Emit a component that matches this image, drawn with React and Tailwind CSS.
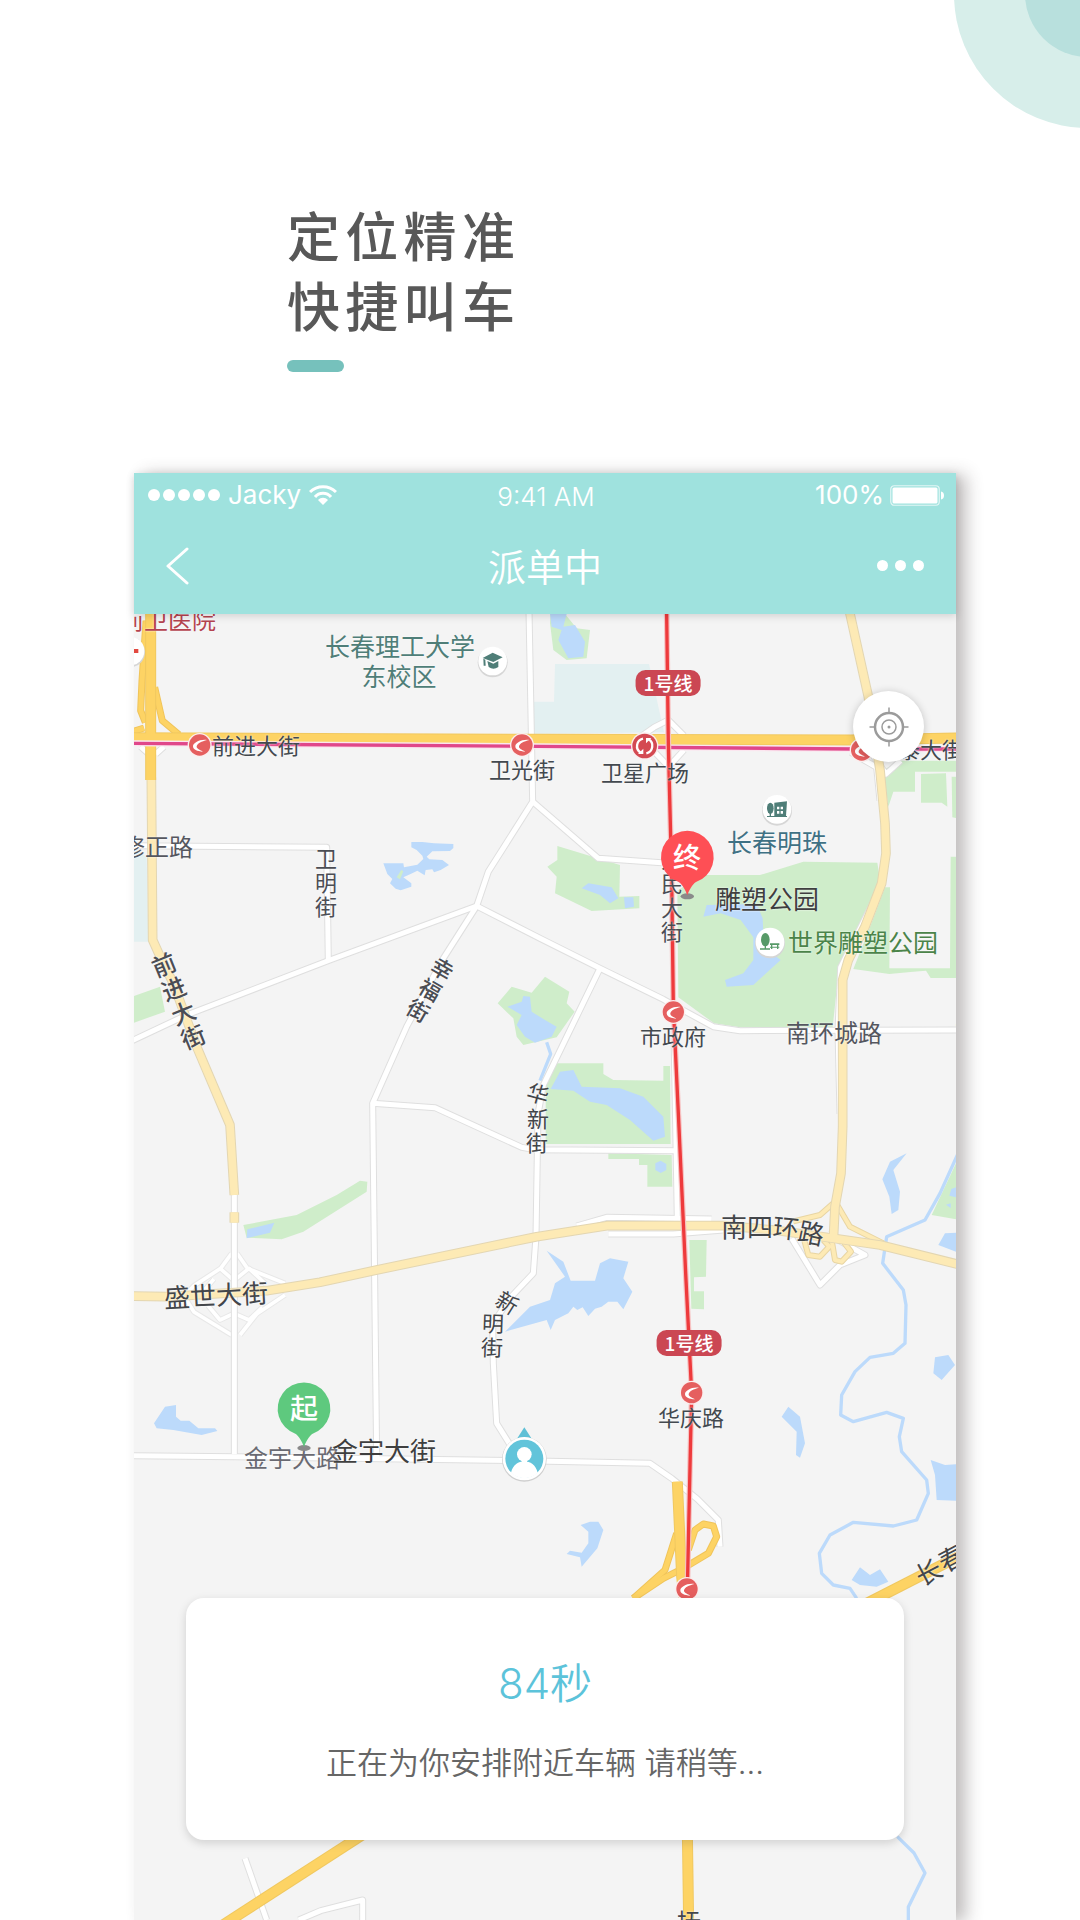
const WATER = '#bcdafb'
const GREEN = '#cfedca'

const campuses = [
  '1263,150 1545,150 1590,355 1200,360 1200,263 1260,263',
  '0,700 38,730 43,983 0,983',
]

const parks = [
  '1250,0 1293,0 1328,43 1368,48 1358,133 1298,138 1258,108 1248,28',
  '1270,696 1458,753 1456,848 1516,846 1516,883 1373,891 1263,838 1268,788 1240,758 1270,738',
  '1630,830 1700,783 1878,783 2008,743 2230,746 2240,808 2193,938 2113,1078 2096,1240 1818,1240 1740,1228 1633,1150',
  '2248,468 2300,440 2466,440 2466,473 2343,473 2343,533 2278,533 2263,578',
  '2361,480 2436,478 2440,578 2423,566 2361,566',
  '2453,488 2466,488 2466,612 2455,610',
  '2253,820 2268,820 2266,1063 2448,1063 2450,728 2466,728 2466,1092 2390,1092 2376,1070 2338,1073 2266,1080 2158,1065 2200,960',
  '0,1146 78,1118 93,1193 0,1226',
  '328,1833 488,1803 608,1743 678,1700 700,1703 698,1733 508,1853 443,1876 338,1871',
  '1091,1168 1133,1118 1193,1136 1233,1088 1306,1133 1298,1168 1322,1193 1268,1270 1168,1293 1148,1268 1138,1213',
  '1265,1348 1408,1348 1408,1380 1438,1398 1588,1400 1588,1356 1608,1356 1610,1590 1235,1590 1235,1410',
  '1423,1618 1613,1623 1615,1718 1540,1718 1540,1653 1515,1653 1515,1635 1423,1635',
  '1666,1878 1718,1878 1716,1988 1680,1990 1680,2032 1710,2032 1710,2086 1672,2084',
  '2466,1648 2393,1803 2466,1816',
]

const lakes = [
  '1248,0 1298,0 1288,38 1323,33 1353,83 1348,128 1303,133 1273,78 1283,48 1253,38',
  '832,684 865,684 900,688 958,690 958,702 948,711 895,712 878,728 886,736 925,738 945,753 920,768 900,775 895,766 875,768 872,784 850,770 830,780 808,790 832,808 832,818 800,829 785,824 768,808 775,795 760,780 748,748 808,748 810,760 850,752 868,735 865,725 848,708 832,700',
  '1343,823 1363,808 1433,820 1453,853 1428,868 1398,843',
  '1470,850 1498,850 1500,878 1473,883',
  '1708,908 1718,873 1868,870 1886,913 1890,1000 1940,1038 1858,1113 1778,1118 1773,1098 1828,1078 1858,1038 1858,970 1820,918 1760,898',
  '340,1846 421,1826 408,1856 338,1873',
  '1120,1178 1163,1163 1168,1146 1188,1148 1193,1193 1233,1218 1268,1238 1253,1268 1203,1286 1173,1268 1148,1233 1163,1203',
  '1250,1425 1278,1373 1318,1368 1343,1418 1458,1423 1528,1448 1588,1508 1593,1568 1558,1580 1488,1518 1418,1473 1368,1463 1318,1430',
  '1564,1648 1580,1640 1597,1650 1597,1668 1580,1677 1564,1668',
  '1238,1910 1288,1943 1310,2000 1383,2000 1398,1948 1428,1933 1483,1943 1468,1993 1495,2033 1468,2086 1450,2063 1423,2063 1403,2078 1383,2084 1363,2106 1346,2080 1330,2088 1318,2078 1303,2098 1263,2118 1250,2148 1238,2118 1113,2153 1188,2078 1248,2058 1263,2008 1293,1988',
  '60,2428 93,2378 126,2373 126,2408 140,2420 166,2420 193,2443 243,2443 250,2451 203,2463 118,2448 68,2443',
  '1340,2733 1368,2723 1393,2723 1408,2748 1390,2803 1343,2858 1338,2830 1298,2820 1308,2810 1343,2816 1363,2788 1363,2753',
  '1963,2378 1998,2408 2013,2488 1998,2531 1986,2523 1988,2453 1943,2408',
  '2403,2230 2443,2223 2463,2253 2423,2298 2398,2278',
  '2390,2538 2433,2553 2466,2551 2466,2660 2408,2658 2403,2583',
  '2153,2898 2178,2860 2208,2883 2238,2866 2263,2903 2228,2918 2178,2913',
  '2318,1618 2278,1668 2298,1733 2293,1788 2273,1800 2266,1748 2245,1696 2268,1643',
  '2413,1893 2433,1858 2466,1856 2466,1913',
  '2452,1725 2466,1720 2466,1750 2446,1745',
  '2436,1772 2450,1768 2450,1782',
]

const rivers = [
  'M2476 1610 L2418 1738 L2373 1818 L2258 1868 L2246 1948 L2308 2028 L2316 2073 L2313 2188 L2278 2218 L2208 2230 L2163 2273 L2123 2343 L2120 2403 L2158 2423 L2258 2395 L2308 2413 L2296 2468 L2303 2513 L2378 2598 L2383 2638 L2348 2718 L2278 2736 L2158 2725 L2088 2763 L2056 2818 L2063 2878 L2098 2913 L2148 2923 L2168 2953',
  'M2290 3668 L2340 3717 L2373 3777 L2323 3879 L2323 3918',
  'M1238 1285 L1250 1320 L1218 1400',
]

const streets = [
  'M0 695 L578 700 L583 1043',
  'M-10 1282 L158 1203 L588 1038 L1028 876 L1218 973 L1398 1063 L1588 1156 L1738 1238 L1818 1250 L2476 1248',
  'M1185 -10 L1196 563 L1063 773 L1028 876 L925 1038 L818 1238 L716 1468 L723 2088 L728 2530',
  'M1196 563 L1393 733 L1583 746',
  'M716 1468 L903 1481 L1163 1600 L1203 1607 L1628 1610',
  'M1398 1063 L1228 1413 L1212 1500 L1210 1618 L1206 1868 L1198 1978 L1130 2050 L1076 2130 L1078 2248 L1088 2428 L1138 2508',
  'M301 1743 L301 2520',
  'M-10 2525 L301 2528 L1168 2540 L1548 2548 L1613 2593 L1690 2655 L1753 2718 L1758 2798',
  'M1620 1250 L1630 1818',
  'M1328 1836 L1418 1810 L1733 1815',
  'M1423 1860 L1618 1860 L1768 1848',
  'M1973 1873 L2058 2013 L2118 1953 L2193 1923 L2080 1860',
  'M1510 375 L1560 340 L1603 318 L1650 365',
  'M1558 410 L1604 458 L1650 408',
  'M2150 415 L2228 460 L2238 560',
  'M2200 400 L2256 480 L2300 440',
  'M20 398 L45 420 M90 398 L65 420',
  'M2225 850 L2120 1060 L2112 1250 L2118 1500',
  'M333 3733 L398 3918',
  'M494 3918 L560 3890 L686 3858 L686 3930',
]

const ramps = [
  'M293 1918 L260 1963 L180 2015 L150 2046 L180 2094 L293 2163',
  'M309 1918 L340 1963 L453 2008',
  'M453 2043 L368 2100 L318 2163',
  'M258 1963 L300 2000 L345 1963 L395 2010',
  'M210 2030 L240 1995 M222 2075 L258 2118 L300 2098 L345 2118 L385 2080',
]

const avenues = [
  'M52 490 L56 978 L84 1040 L118 1108 L188 1298 L288 1533 L301 1743',
  'M301 1795 L301 1826',
  'M-10 2046 L98 2048 L398 2030 L558 2005 L728 1968 L1208 1868 L1418 1835 L1768 1835 L1918 1848 L2098 1873 L2238 1893 L2476 1952',
  'M2146 -10 L2203 248 L2238 468 L2253 628 L2256 718 L2243 808 L2193 938 L2143 1038 L2126 1098 L2126 1538 L2121 1678 L2103 1778 L2098 1878',
]

const avenueRamps = [
  'M2108 1770 L2148 1838 L2248 1888',
  'M2098 1768 L2058 1803 L1978 1822',
  'M2068 1878 L2086 1898 L2058 1928 L2023 1923 L2011 1880',
  'M2093 1878 L2103 1938 L2123 1943 L2151 1913 L2128 1883',
]

const highways = [
  'M50 -10 L50 498',
  'M-10 371 L1218 376 L2150 378 L2476 372',
  'M1630 2603 L1643 2888 L1650 2952 L1664 3930',
  'M2183 2976 L2486 2821',
  'M762 3613 L259 3938',
]

const highwayRamps = [
  'M36 20 L24 200 L20 290 L34 325',
  'M62 220 L85 320 L135 362',
  'M-10 355 L30 342',
  'M1628 2758 L1593 2868 L1498 2953',
  'M1658 2858 L1588 2893 L1498 2953',
  'M1663 2808 L1683 2748 L1708 2730 L1738 2736 L1748 2768 L1723 2818 L1648 2863',
]

const stations = [[197, 393], [1164, 393], [2183, 408], [1618, 1194], [1673, 2336], [1659, 2925]]

const labels = [
  { text: '前卫医院', x: 34, y: 7, className: 'text-[24px] text-[#b5434f]' },
  { text: '长春理工大学', x: 266, y: 33, className: 'text-[25px] text-[#4f7e78]' },
  { text: '东校区', x: 265, y: 63, className: 'text-[25px] text-[#4f7e78]' },
  { text: '前进大街', x: 122, y: 132, className: 'text-[22px] text-[#43494f]' },
  { text: '卫光街', x: 388, y: 156, className: 'text-[22px] text-[#43494f]' },
  { text: '卫星广场', x: 511, y: 159, className: 'text-[22px] text-[#43494f]' },
  { text: '亚泰大街', x: 786, y: 136, className: 'text-[22px] text-[#43494f]' },
  { text: '修正路', x: 23, y: 234, className: 'text-[24px] text-[#55575f]' },
  { text: '长春明珠', x: 643, y: 229, className: 'text-[25px] text-[#3f7184]' },
  { text: '雕塑公园', x: 633, y: 286, className: 'text-[26px] text-[#3f3f3f]' },
  { text: '世界雕塑公园', x: 729, y: 329, className: 'text-[25px] text-[#4b8449]' },
  { text: '市政府', x: 539, y: 423, className: 'text-[22px] text-[#43494f]' },
  { text: '南环城路', x: 700, y: 420, className: 'text-[24px] text-[#55575f]' },
  { text: '南', x: 833, y: 420, className: 'text-[24px] text-[#55575f]' },
  { text: '盛世大街', x: 82, y: 682, turn: -3, className: 'text-[26px] text-[#43464a]' },
  { text: '金宇大路', x: 158, y: 845, className: 'text-[24px] text-[#6a6a72]' },
  { text: '金宇大街', x: 250, y: 838, className: 'text-[26px] text-[#3f3f3f]' },
  { text: '华庆路', x: 557, y: 804, className: 'text-[22px] text-[#43494f]' },
  { text: '抚', x: 555, y: 1309, className: 'text-[24px] text-[#43464a]' },
]

const columnLabels = [
  { text: '卫明街', x: 192, y: 269, turn: 0, className: 'w-6 text-[22px] leading-6' },
  { text: '人民大街', x: 538, y: 282, turn: 0, className: 'w-6 text-[22px] leading-6' },
  { text: '前进大街', x: 45, y: 388, turn: -22, className: 'w-[26px] text-[24px] leading-[26px] font-medium' },
  { text: '幸福街', x: 296, y: 376, turn: 30, className: 'w-6 text-[22px] leading-6 font-medium' },
]

// labels that bend along their road, one entry per character
const bentLabels = [
  { size: 'text-[22px]', chars: [['华', 404, 480, 15], ['新', 404, 505, 0], ['街', 403, 529, 0]] },
  { size: 'text-[22px]', chars: [['新', 373, 689, 32], ['明', 359, 710, 2], ['街', 358, 734, 2]] },
  { size: 'text-[26px]', chars: [['南', 600, 614, 0], ['四', 626, 614, 0], ['环', 652, 615, 6], ['路', 677, 620, 12]] },
  { size: 'text-[26px]', chars: [['长', 795, 959, -28], ['春', 818, 945, -28]] },
]

const lineBadges = [[534, 69], [555, 729]]

function place(x, y, turn) {
  return {
    left: `${(x / 822) * 100}%`,
    top: `${(y / 1306) * 100}%`,
    rotate: turn ? `${turn}deg` : undefined,
  }
}

function Roads({ paths, color, edge, width }) {
  return (
    <g fill="none" strokeLinejoin="round">
      <g stroke={edge} strokeWidth={width + 6}>
        {paths.map(d => <path key={d} d={d} />)}
      </g>
      <g stroke={color} strokeWidth={width}>
        {paths.map(d => <path key={d} d={d} />)}
      </g>
    </g>
  )
}

function Poi({ x, y, children }) {
  return (
    <g transform={`translate(${x} ${y})`}>
      <circle cy="4" r="45" fill="#d6d6d6" />
      <circle r="43" fill="#fff" />
      {children}
    </g>
  )
}

function Pin({ x, y, color }) {
  return (
    <g transform={`translate(${x} ${y})`}>
      <ellipse cy="119" rx="20" ry="9" fill="#8a8a8a" />
      <path d="M0 116 C-6 100 -14 84 -26 76 A79 79 0 1 1 26 76 C14 84 6 100 0 116Z" fill={color} />
    </g>
  )
}

function MapDrawing() {
  return (
    <svg viewBox="0 0 2466 3918" className="block h-auto w-full bg-[#f4f4f4]" aria-hidden="true">
      {campuses.map(p => <polygon key={p} points={p} fill="#e3f0f1" />)}
      {parks.map(p => <polygon key={p} points={p} fill={GREEN} />)}
      {lakes.map(p => <polygon key={p} points={p} fill={WATER} />)}
      <path d="M788 790 L802 768 L808 772 L798 796Z" fill={GREEN} />
      <g fill="none" stroke={WATER} strokeWidth="10" strokeLinejoin="round">
        {rivers.map(d => <path key={d} d={d} />)}
      </g>

      <Roads paths={ramps} color="#fff" edge="#e8e8e8" width={11} />
      <Roads paths={streets} color="#fff" edge="#dfdfdf" width={15} />
      <Roads paths={avenueRamps} color="#fdeab5" edge="#e8d5a3" width={12} />
      <Roads paths={avenues} color="#fdeab5" edge="#e3d6b2" width={23} />
      <Roads paths={highwayRamps} color="#fdd364" edge="#f0c45a" width={15} />
      <Roads paths={highways} color="#fdd364" edge="#f0c860" width={27} />

      {/* Metro lines */}
      <g fill="none">
        <path d="M0 388 L1218 397 L2158 405 L2466 405" stroke="#fbe6ef" strokeWidth="18" />
        <path d="M0 388 L1218 397 L2158 405 L2466 405" stroke="#e0478a" strokeWidth="10" />
        <path d="M1598 0 L1603 388 L1613 788 L1618 1178 L1633 1498 L1655 1978 L1673 2338 L1670 2468 L1660 2928" stroke="#f6c3c3" strokeWidth="17" />
        <path d="M1598 0 L1603 388 L1613 788 L1618 1178 L1633 1498 L1655 1978 L1673 2338 L1670 2468 L1660 2928" stroke="#ee3a3c" strokeWidth="10" />
      </g>

      {stations.map(([x, y]) => (
        <g key={`${x}-${y}`} transform={`translate(${x} ${y})`}>
          <circle r="36" fill="#fbeeee" />
          <circle r="32" fill="#e55f5f" />
          <path d="M22 -15 C0 -18 -20 -6 -20 4 C-20 14 -8 19 10 20 C-2 14 -10 10 -9 4 C-7 -5 6 -11 22 -15Z" fill="#fff" />
        </g>
      ))}
      <g transform="translate(1532 396)">
        <circle r="41" fill="#fbeeee" />
        <circle r="37" fill="#d44a52" />
        <g fill="none" stroke="#fff" strokeWidth="7">
          <path d="M-5 -22 A23 23 0 0 0 -12 20" />
          <path d="M5 22 A23 23 0 0 0 12 -20" />
        </g>
        <path d="M-20 24 L-4 24 L-4 8Z M20 -24 L4 -24 L4 -8Z" fill="#fff" />
      </g>

      <Poi x={1076} y={141}>
        <path d="M-30 -9 L0 -25 L30 -11 L2 3Z M-16 0 L2 8 L17 0 L17 18 Q2 28 -12 18Z M-28 -7 L-22 -4 L-21 14 L-27 14Z" fill="#4f7e78" />
      </Poi>
      <Poi x={1929} y={586}>
        <ellipse cx="-20" cy="-3" rx="10" ry="17" fill="#4f7e78" />
        <path d="M-22 8 h4 v14 h-4Z M-30 20 h60 v3 h-60Z" fill="#4f7e78" />
        <path d="M-8 -20 L30 -24 L27 20 L-8 20Z" fill="#4f7e78" />
        <path d="M0 -8 h7 v8 h-7Z M11 -8 h7 v8 h-7Z M0 5 h7 v8 h-7Z M11 5 h7 v8 h-7Z" fill="#fff" />
      </Poi>
      <Poi x={1908} y={984}>
        <ellipse cx="-14" cy="-7" rx="13" ry="20" fill="#579a68" />
        <path d="M-16 4 h4 v18 h-4Z M-30 19 h30 v4 h-30Z M0 4 h28 v5 h-28Z M3 9 h4 v12 h-4Z M21 9 h4 v12 h-4Z M0 14 h28 v3 h-28Z" fill="#579a68" />
      </Poi>
      <Poi x={-12} y={111}>
        <path d="M0 -6 h25 v12 h-25Z" fill="#e2483f" />
      </Poi>

      {/* Car position */}
      <g transform="translate(1171 2534)">
        <path d="M-22 -60 L0 -94 L22 -60Z" fill="#5fc0d6" />
        <circle cy="2" r="67" fill="#cfcfcf" />
        <circle r="65" fill="#fff" />
        <circle r="57" fill="#62c4da" />
        <circle cy="-13" r="22" fill="#fff" />
        <path d="M-8 0 h16 v14 h-16Z M-40 42 C-34 18 -18 8 0 8 C18 8 34 18 40 42 A57 57 0 0 1 -40 42Z" fill="#fff" />
      </g>
    </svg>
  )
}

function Pins() {
  return (
    <>
      <svg viewBox="0 0 2466 3918" className="absolute inset-0 h-full w-full" aria-hidden="true">
        <Pin x={1660} y={728} color="#fe4f55" />
        <Pin x={510} y={2383} color="#5ec97e" />
      </svg>
      <span className="absolute -translate-x-1/2 -translate-y-1/2 pb-[2px] text-[28px] leading-8 font-medium text-white" style={place(553, 243)}>终</span>
      <span className="absolute -translate-x-1/2 -translate-y-1/2 pb-[2px] text-[28px] leading-8 font-medium text-white" style={place(170, 794)}>起</span>
    </>
  )
}

function MapLabels() {
  return (
    <div className="[text-shadow:0_0_2px_#ffffff]">
      {labels.map(l => (
        <span
          key={`${l.text}-${l.y}`}
          className={`absolute -translate-x-1/2 -translate-y-1/2 pb-1 whitespace-nowrap leading-8 ${l.className}`}
          style={place(l.x, l.y, l.turn)}
        >
          {l.text}
        </span>
      ))}
      {columnLabels.map(l => (
        <span
          key={l.text}
          className={`absolute -translate-x-1/2 -translate-y-1/2 pb-1 text-center break-all text-[#4b4d54] ${l.className}`}
          style={place(l.x, l.y, l.turn)}
        >
          {l.text}
        </span>
      ))}
      {bentLabels.map(l => (
        <div key={l.chars[0][0] + l.chars[0][1]}>
          {l.chars.map(([char, x, y, turn]) => (
            <span
              key={char}
              className={`absolute -translate-x-1/2 -translate-y-1/2 pb-1 leading-8 text-[#43464a] ${l.size}`}
              style={place(x, y, turn)}
            >
              {char}
            </span>
          ))}
        </div>
      ))}
    </div>
  )
}

function StatusBar() {
  return (
    <div className="grid h-11 grid-cols-3 items-center pr-3 pl-[14px] font-['Inter','Liberation_Sans',sans-serif] text-[26px] leading-8">
      <div className="flex items-center gap-2">
        <div className="flex gap-[3px]">
          {[0, 1, 2, 3, 4].map(i => <span key={i} className="size-3 rounded-full bg-white" />)}
        </div>
        <span>Jacky</span>
        <svg viewBox="0 0 28 20" className="h-5 w-7" fill="none" stroke="#fff" strokeWidth="3" aria-hidden="true">
          <path d="M1 7 C8 0 20 0 27 7" />
          <path d="M6 12 C10 7 18 7 22 12" />
          <path d="M9 15 C12 12 16 12 19 15 L14 20Z" fill="#fff" stroke="none" />
        </svg>
      </div>
      <span className="pt-1 text-center font-light">9:41 AM</span>
      <div className="flex items-center justify-end gap-[6px]">
        <span>100%</span>
        <svg viewBox="0 0 54 21" className="h-[21px] w-[54px]" aria-hidden="true">
          <rect x="0.75" y="0.75" width="48.5" height="19.5" rx="3.5" fill="none" stroke="#fff" strokeOpacity="0.7" strokeWidth="1.2" />
          <rect x="2.5" y="2.5" width="45" height="16" rx="1.5" fill="#fff" />
          <path d="M51 6.500 Q54 7 54 10.500 Q54 14 51 14.500Z" fill="#fff" />
        </svg>
      </div>
    </div>
  )
}

function TitleBar() {
  return (
    <div className="flex h-[97px] items-center justify-between px-8">
      <button type="button" aria-label="返回" className="flex w-[50px] justify-start">
        <svg viewBox="0 0 23 38" className="h-[38px] w-[23px]" fill="none" stroke="#fff" strokeWidth="3" strokeLinecap="round" strokeLinejoin="round" aria-hidden="true">
          <path d="M21 2 L2 19 L21 36" />
        </svg>
      </button>
      <h2 className="pb-[2px] text-[38px] leading-[48px] font-[350]">派单中</h2>
      <button type="button" aria-label="更多" className="flex w-[50px] justify-end gap-[7px]">
        <span className="size-[11px] shrink-0 rounded-full bg-white" />
        <span className="size-[11px] shrink-0 rounded-full bg-white" />
        <span className="size-[11px] shrink-0 rounded-full bg-white" />
      </button>
    </div>
  )
}

export default function App() {
  return (
    <div className="relative overflow-hidden bg-white font-['Noto_Sans_CJK_SC',sans-serif]">
      <svg viewBox="0 0 126 128" className="absolute top-0 right-0 h-32 w-[126px]" aria-hidden="true">
        <circle cx="134" cy="-6" r="134" fill="#d7eeea" />
        <circle cx="134" cy="-6" r="63" fill="#b8e0dd" />
      </svg>

      <div className="px-[287px] pt-[199px] pb-[101px]">
        <h1 className="text-[53px] leading-[70px] font-medium tracking-widest whitespace-nowrap text-[#585858]">
          定位精准<br />快捷叫车
        </h1>
        <div className="mt-[21px] h-3 w-[57px] rounded-full bg-[#76c1bc]" />
      </div>

      <main className="mr-[124px] ml-[134px] shadow-[10px_2px_16px_rgba(50,40,40,0.3)]">
        <header className="relative z-10 bg-[#9fe2de] text-white shadow-[0_2px_8px_rgba(0,0,0,0.15)]">
          <StatusBar />
          <TitleBar />
        </header>

        <section className="relative overflow-hidden">
          <MapDrawing />
          <MapLabels />
          {lineBadges.map(([x, y]) => (
            <span
              key={y}
              className="absolute -translate-x-1/2 -translate-y-1/2 rounded-[10px] bg-[#cb4753] px-2 text-[19px] leading-[26px] font-medium whitespace-nowrap text-white"
              style={place(x, y)}
            >
              1号线
            </span>
          ))}
          <Pins />

          <button
            type="button"
            aria-label="定位"
            className="absolute top-[77px] right-8 flex size-[71px] items-center justify-center rounded-full bg-white shadow-[0_1px_8px_rgba(0,0,0,0.2)]"
          >
            <svg viewBox="0 0 40 40" className="size-10" fill="none" stroke="#9b9b9b" aria-hidden="true">
              <circle cx="20" cy="20" r="14" strokeWidth="2.500" />
              <circle cx="20" cy="20" r="7" strokeWidth="1.500" />
              <circle cx="20" cy="20" r="1.500" fill="#9b9b9b" stroke="none" />
              <path d="M20 0.500 V6 M20 34 V39.500 M0.500 20 H6 M34 20 H39.500" strokeWidth="1.500" />
            </svg>
          </button>

          <div className="absolute inset-x-[52px] bottom-20 rounded-[18px] bg-white pt-[62px] pb-[57px] text-center shadow-[0_3px_10px_rgba(0,0,0,0.15)]">
            <p className="font-['Inter','Noto_Sans_CJK_SC',sans-serif] text-[42px] leading-[48px] font-[350] text-[#5cc3da]">84秒</p>
            <p className="mt-[35px] font-['Inter','Noto_Sans_CJK_SC',sans-serif] text-[31px] leading-10 font-[350] text-[#666666]">正在为你安排附近车辆 请稍等…</p>
          </div>
        </section>
      </main>
    </div>
  )
}
